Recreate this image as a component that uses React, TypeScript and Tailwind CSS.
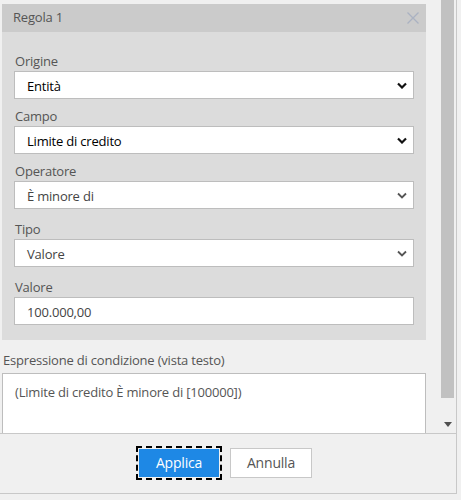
import React from 'react';

const font = { fontFamily: '"Open Sans", "Noto Sans", "Liberation Sans", sans-serif' };

function Chevron({ dark }: { dark?: boolean }) {
  return (
    <svg width="10" height="7" viewBox="0 0 10 7" className="shrink-0">
      <path
        d="M1 1.5 L5 5.5 L9 1.5"
        fill="none"
        stroke={dark ? '#111' : '#555'}
        strokeWidth={dark ? 2.2 : 1.8}
      />
    </svg>
  );
}

function Field({
  label,
  value,
  dark,
  select = true,
  className = '',
}: {
  label: string;
  value: string;
  dark?: boolean;
  select?: boolean;
  className?: string;
}) {
  return (
    <div className={className}>
      <div className="h-5 leading-5 text-[13px] text-[#555] pl-[1px]">{label}</div>
      <div className="h-7 bg-white border border-[#bdbdbd] flex items-center pl-3 pr-[6px]">
        <span className={`flex-1 pt-[3px] text-[13px] ${dark ? 'text-black' : 'text-[#444]'}`}>{value}</span>
        {select && <Chevron dark={dark} />}
      </div>
    </div>
  );
}

export default function App() {
  return (
    <div className="w-[461px] h-[500px] bg-[#f0f0f0] tracking-[-0.2px]" style={font}>
      <div className="w-[457px] h-[494px] border-r border-b border-[#c8c8c8] flex flex-col">
        {/* scroll area */}
        <div className="h-[433px] flex">
          <div className="w-[441px] pl-[2px] pr-[15px] pt-1 flex flex-col">
            {/* rule card */}
            <div className="bg-[#dcdcdc]">
              <div className="h-7 bg-[#cbcbcb] flex items-center justify-between pl-[11px] pr-[7px]">
                <span className="text-[13px] text-[#555]">Regola 1</span>
                <svg width="12" height="12" viewBox="0 0 12 12">
                  <path d="M0.5 0.5 L11.5 11.5 M11.5 0.5 L0.5 11.5" stroke="#aab2c2" strokeWidth="1.3" />
                </svg>
              </div>
              <div className="px-3 pt-[19px] pb-[15px]">
                <Field label="Origine" value="Entità" dark />
                <Field label="Campo" value="Limite di credito" dark className="mt-[7px]" />
                <Field label="Operatore" value="È minore di" className="mt-[7px]" />
                <Field label="Tipo" value="Valore" className="mt-[10px]" />
                <Field label="Valore" value="100.000,00" select={false} className="mt-[10px]" />
              </div>
            </div>
            <div className="mt-[10px] h-5 leading-5 text-[13px] text-[#555] pl-[1px]">
              Espressione di condizione (vista testo)
            </div>
            <div className="mt-[3px] flex-1 bg-white border border-[#bdbdbd] border-b-0 px-3 pt-[9px] text-[13px] text-[#555]">
              (Limite di credito È minore di [100000])
            </div>
          </div>
          {/* scrollbar */}
          <div className="w-[13px] flex flex-col">
            <div className="h-[398px] bg-[#c1c1c1]" />
            <div className="flex-1 flex items-end justify-center pb-[6px]">
              <svg width="8" height="5" viewBox="0 0 8 5">
                <path d="M0 0 H8 L4 5 Z" fill="#505050" />
              </svg>
            </div>
          </div>
        </div>
        {/* footer */}
        <div className="flex-1 border-t border-[#c8c8c8] flex items-center justify-center gap-2 pr-2 pb-[2px]">
          <div className="border-2 border-dashed border-black p-[1px]">
            <button className="w-[80px] h-7 bg-[#1e88e5] text-white text-[14px]">Applica</button>
          </div>
          <button className="w-[82px] h-[30px] bg-white border border-[#c8c8c8] text-[#555] text-[14px]">
            Annulla
          </button>
        </div>
      </div>
    </div>
  );
}
